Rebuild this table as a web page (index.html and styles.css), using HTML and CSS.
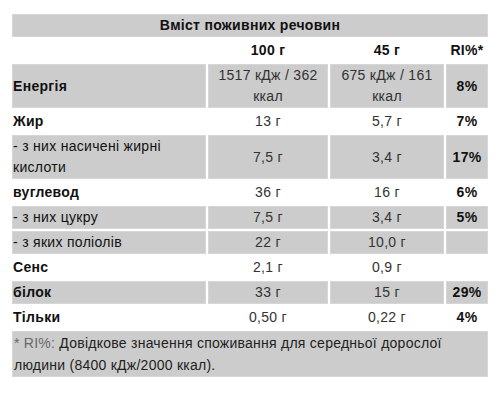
FILE: index.html
```html
<!DOCTYPE html>
<html lang="uk">
<head>
<meta charset="utf-8">
<title>Вміст поживних речовин</title>
<link rel="stylesheet" href="styles.css">
</head>
<body>
<table class="nutri">
  <colgroup>
    <col class="c-label">
    <col class="c-100">
    <col class="c-45">
    <col class="c-ri">
  </colgroup>
  <tr class="shade">
    <th colspan="4" class="title">Вміст поживних речовин</th>
  </tr>
  <tr class="head">
    <th></th>
    <th>100 г</th>
    <th>45 г</th>
    <th>RI%*</th>
  </tr>
  <tr class="shade">
    <td class="label strong">Енергія</td>
    <td class="val">1517 кДж / 362 ккал</td>
    <td class="val">675 кДж / 161 ккал</td>
    <td class="ri">8%</td>
  </tr>
  <tr>
    <td class="label strong">Жир</td>
    <td class="val">13 г</td>
    <td class="val">5,7 г</td>
    <td class="ri">7%</td>
  </tr>
  <tr class="shade">
    <td class="label">- з них насичені жирні кислоти</td>
    <td class="val">7,5 г</td>
    <td class="val">3,4 г</td>
    <td class="ri">17%</td>
  </tr>
  <tr>
    <td class="label strong">вуглевод</td>
    <td class="val">36 г</td>
    <td class="val">16 г</td>
    <td class="ri">6%</td>
  </tr>
  <tr class="shade">
    <td class="label">- з них цукру</td>
    <td class="val">7,5 г</td>
    <td class="val">3,4 г</td>
    <td class="ri">5%</td>
  </tr>
  <tr class="shade">
    <td class="label">- з яких поліолів</td>
    <td class="val">22 г</td>
    <td class="val">10,0 г</td>
    <td class="ri"></td>
  </tr>
  <tr>
    <td class="label strong">Сенс</td>
    <td class="val">2,1 г</td>
    <td class="val">0,9 г</td>
    <td class="ri"></td>
  </tr>
  <tr class="shade">
    <td class="label strong">білок</td>
    <td class="val">33 г</td>
    <td class="val">15 г</td>
    <td class="ri">29%</td>
  </tr>
  <tr>
    <td class="label strong">Тільки</td>
    <td class="val">0,50 г</td>
    <td class="val">0,22 г</td>
    <td class="ri">4%</td>
  </tr>
  <tr class="shade">
    <td colspan="4" class="note"><span class="note-key">* RI%:</span> Довідкове значення споживання для середньої дорослої людини (8400 кДж/2000 ккал).</td>
  </tr>
</table>
</body>
</html>
```
FILE: styles.css
```css
html, body {
  margin: 0;
  padding: 0;
  background: #fff;
}

body {
  font-family: "Liberation Sans", Arial, sans-serif;
  font-size: 14px;
  letter-spacing: 0.3px;
  color: #222;
}

.nutri {
  margin: 12px 10px;
  width: 480px;
  table-layout: fixed;
  border-collapse: separate;
  border-spacing: 2px;
}

.c-label { width: 194px; }
.c-100 { width: 120px; }
.c-45 { width: 114px; }
.c-ri { width: 42px; }

.nutri th,
.nutri td {
  padding: 0;
  line-height: 21px;
  border: 1px solid transparent;
  vertical-align: middle;
}

.shade th,
.shade td {
  background: #cccccc;
  border-color: #d6d6d6;
}

.nutri th {
  font-weight: bold;
  color: #111;
  text-align: center;
}

.title {
  text-align: center;
}

.label {
  text-align: left;
  color: #111;
}

.strong {
  font-weight: bold;
}

.val {
  text-align: center;
  color: #333;
}

.ri {
  text-align: center;
  font-weight: bold;
  color: #111;
}

.nutri .note {
  text-align: left;
  padding: 0 40px 0 1px;
  line-height: 22px;
  letter-spacing: 0.25px;
  color: #222;
}

.note-key {
  color: #6a6a6a;
}
```
